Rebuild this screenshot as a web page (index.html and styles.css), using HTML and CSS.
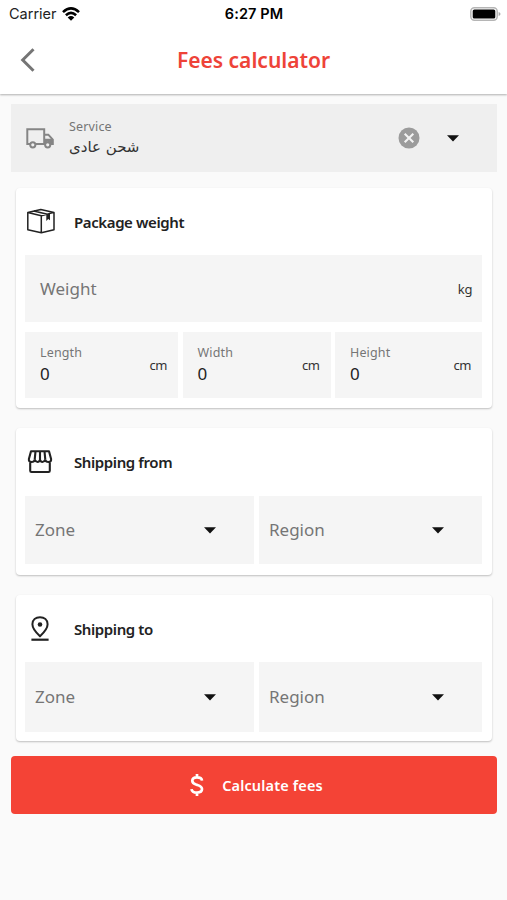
FILE: index.html
```html
<!DOCTYPE html>
<html lang="en">
<head>
<meta charset="utf-8">
<title>Fees calculator</title>
<link rel="stylesheet" href="styles.css">
</head>
<body>
<header class="top">
  <div class="status">
    <div class="carrier"><span>Carrier</span>
      <svg width="18" height="14" viewBox="0 0 18 14" fill="none" stroke="#000" stroke-width="2.6"><path d="M1 5.1Q9-2.3 17 5.1M3.9 8.3Q9 3.6 14.1 8.3"/><path d="M5.7 10.4Q9 7.8 12.3 10.4L9 13.7Z" fill="#000" stroke="none"/></svg>
    </div>
    <div class="time">6:27 PM</div>
    <svg class="battery" width="31" height="14" viewBox="0 0 31 14"><rect x=".8" y=".8" width="26.4" height="12.4" rx="3.6" fill="#fff" stroke="#b5b5b5" stroke-width="1.5"/><rect x="2.7" y="2.5" width="22.6" height="9" rx="1.6"/><path d="M28.6 5Q30.5 5.4 30.5 7T28.6 9Z" fill="#aaa"/></svg>
  </div>
  <div class="nav">
    <svg class="back" width="16" height="24" viewBox="0 0 16 24" fill="none" stroke="#757575" stroke-width="3"><path d="M13.5 1.2 2.7 12l10.8 10.8"/></svg>
    <h1>Fees calculator</h1>
  </div>
</header>
<main>
  <div class="service">
    <svg class="truck" width="28" height="22" viewBox="0 0 28 22" fill="none" stroke="#858585" stroke-width="2"><path d="M4.2 17H1.3V2.2h16.9V17H9.2M18.2 7.7h4.1l4.5 5V17h-2.3M18.2 17h1"/><path d="M18.7 11.8h8V17h-2Q22 13 19 16Z" fill="#858585" stroke="none"/><circle cx="6.8" cy="17.8" r="2.6"/><circle cx="21.7" cy="17.8" r="2.6"/></svg>
    <div class="service-text"><span class="label sv">Service</span><span class="arabic" lang="ar" dir="rtl">شحن عادى</span></div>
    <svg class="clear" width="22" height="22" viewBox="0 0 22 22"><circle cx="11" cy="11" r="10.5" fill="#9b9b9b"/><path d="m6.7 6.7 8.6 8.6m0-8.6-8.6 8.6" stroke="#f2f2f2" stroke-width="2.1"/></svg>
    <svg class="arrow" width="12" height="7" viewBox="0 0 12 7"><path d="M0 .3h12L6 6.5Z"/></svg>
  </div>

  <section class="card package">
    <div class="card-head">
      <svg width="30" height="28" viewBox="0 0 30 28" fill="none" stroke="#222" stroke-width="1.5" stroke-linejoin="round"><path d="m1.8 4.6 13-3.1L28 4.4v17.3L15.3 24.8 1.8 21.8ZM1.8 4.6l13.5 3.2L28 4.4M15.3 7.8v17M7.8 3.1l13.6 3.2"/><path d="m20.3 6.4 3.7-1v6.9l-1.8-1.2-1.9 1.8Z" fill="#222" stroke="none"/></svg>
      <h2>Package weight</h2>
    </div>
    <div class="field weight"><span class="hint">Weight</span><span class="unit">kg</span></div>
    <div class="sizes">
      <div class="field"><div class="value"><span class="label">Length</span><b>0</b></div><span class="unit">cm</span></div>
      <div class="field"><div class="value"><span class="label">Width</span><b>0</b></div><span class="unit">cm</span></div>
      <div class="field"><div class="value"><span class="label">Height</span><b>0</b></div><span class="unit">cm</span></div>
    </div>
  </section>

  <section class="card from">
    <div class="card-head">
      <svg width="30" height="28" viewBox="0 0 30 28" fill="none" stroke="#222" stroke-width="2.1" stroke-linejoin="round"><path d="M5 3.3h18L25.1 11q.3 3-2.6 3-2.8 0-3.2-2.4Q18.2 14 16.4 14 14.6 14 14 11.8 13.4 14 11.6 14 9.8 14 8.7 11.6 8.3 14 5.5 14 2.6 14 2.9 11ZM9.5 3.3l-.8 8.3M14 3.3v8.5M18.5 3.3l.8 8.3M4.2 13.5v9.2q0 1.3 1.3 1.3h17q1.3 0 1.3-1.3v-9.2"/></svg>
      <h2>Shipping from</h2>
    </div>
    <div class="selects">
      <div class="field"><span class="hint">Zone</span><svg class="arrow" width="12" height="7" viewBox="0 0 12 7"><path d="M0 .3h12L6 6.5Z"/></svg></div>
      <div class="field"><span class="hint">Region</span><svg class="arrow" width="12" height="7" viewBox="0 0 12 7"><path d="M0 .3h12L6 6.5Z"/></svg></div>
    </div>
  </section>

  <section class="card to">
    <div class="card-head">
      <svg width="30" height="28" viewBox="0 0 30 28" fill="none" stroke="#222" stroke-width="2"><path d="M14 21.2Q6.4 14.2 6.4 9.2C6.4 4.6 9.8 2.2 14 2.2s7.6 2.4 7.6 7q0 5-7.6 12Z"/><circle cx="14" cy="9.5" r="2.3" fill="#222" stroke="none"/><path d="M5.4 24.7h17.2" stroke-width="2.2"/></svg>
      <h2>Shipping to</h2>
    </div>
    <div class="selects">
      <div class="field"><span class="hint">Zone</span><svg class="arrow" width="12" height="7" viewBox="0 0 12 7"><path d="M0 .3h12L6 6.5Z"/></svg></div>
      <div class="field"><span class="hint">Region</span><svg class="arrow" width="12" height="7" viewBox="0 0 12 7"><path d="M0 .3h12L6 6.5Z"/></svg></div>
    </div>
  </section>

  <button class="submit" type="button">
    <svg width="14" height="24" viewBox="0 0 14 24" fill="none" stroke="#fff" stroke-width="2.7"><path d="M12 7.6Q11.7 4.4 7 4.4 2.3 4.4 2.3 7.8c0 3 2.7 3.5 4.7 4.1s5 1.3 5 4.2q0 3.5-5 3.5-5.1 0-5.5-3.5M7 1v3.4M7 19.6V23"/></svg>
    <span>Calculate fees</span>
  </button>
</main>
</body>
</html>
```
FILE: styles.css
```css
* { box-sizing: border-box; }
body { margin: 0; height: 900px; background: #fafafa; color: #222; font-family: "Noto Sans", sans-serif; overflow: hidden; }
svg { display: block; flex: none; }
h1, h2 { margin: 0; white-space: nowrap; }
span { white-space: nowrap; }

.top { height: 94px; background: #fff; box-shadow: 0 1px 2px rgba(0, 0, 0, .3); }
.status { height: 27px; display: grid; grid-template-columns: 1fr auto 1fr; align-items: center; padding: 0 8px 0 9px; font-family: Inter, sans-serif; font-size: 14.5px; color: #222; }
.carrier { display: flex; align-items: center; gap: 5px; }
.time { font-weight: 600; color: #000; letter-spacing: .1px; }
.battery { justify-self: end; margin-right: -2px; }
.nav { height: 65px; display: grid; grid-template-columns: 36px 1fr 36px; align-items: center; }
.back { margin-left: 20px; }
h1 { text-align: center; font-size: 21px; font-weight: 600; line-height: 30px; color: #ee4338; }

main { padding: 10px 10px 0 11px; }
.service { height: 68px; background: #efefef; display: flex; align-items: center; padding: 0 38px 0 15px; }
.service-text { display: flex; flex-direction: column; align-items: flex-start; margin-left: 15px; flex: 1; }
.label { font-size: 12.5px; line-height: 18px; letter-spacing: .15px; color: #757575; }
.arabic { font-family: "DejaVu Sans", sans-serif; font-size: 15px; line-height: 22px; color: #333; }
.clear { margin-right: 27px; }
.arrow { fill: #111; }

.card { margin: 0 5px 0; padding: 0 10px 0 9px; background: #fff; border-radius: 4px; box-shadow: 0 1px 2px rgba(0, 0, 0, .24); }
.package { margin-top: 16px; height: 220px; }
.from { margin-top: 20px; height: 147px; }
.to { margin-top: 20px; height: 146px; }
.card-head { height: 67px; display: flex; align-items: center; padding-left: 1px; gap: 18px; }
.from .card-head { height: 68px; }
h2 { font-size: 15px; font-weight: 600; line-height: 24px; letter-spacing: -.4px; }
.field { background: #f5f5f5; display: flex; align-items: center; justify-content: space-between; }
.weight { height: 67px; padding: 0 10px 0 15px; }
.hint { font-size: 17px; color: #757575; }
.selects .hint { line-height: 24px; padding-bottom: 1px; }
.unit { font-size: 13px; letter-spacing: -.4px; color: #333; }
.sizes { display: grid; grid-template-columns: 153px 148px 147px; justify-content: space-between; margin-top: 10px; }
.sizes .field { height: 66px; padding: 0 11px 0 15px; }
.value { display: flex; flex-direction: column; }
.value b { font-size: 17px; font-weight: 400; line-height: 24px; color: #222; }
.selects { display: grid; grid-template-columns: 229px 223px; justify-content: space-between; }
.selects .field { height: 68px; padding: 0 38px 0 10px; }
.to .selects .field { height: 70px; }

.submit { display: flex; width: 100%; height: 58px; margin-top: 15px; padding: 0 0 0 5px; border: 0; border-radius: 4px; background: #f44336; color: #fff; align-items: center; justify-content: center; gap: 18px; font: 600 14.5px/22px "Noto Sans", sans-serif; letter-spacing: .15px; }
```
